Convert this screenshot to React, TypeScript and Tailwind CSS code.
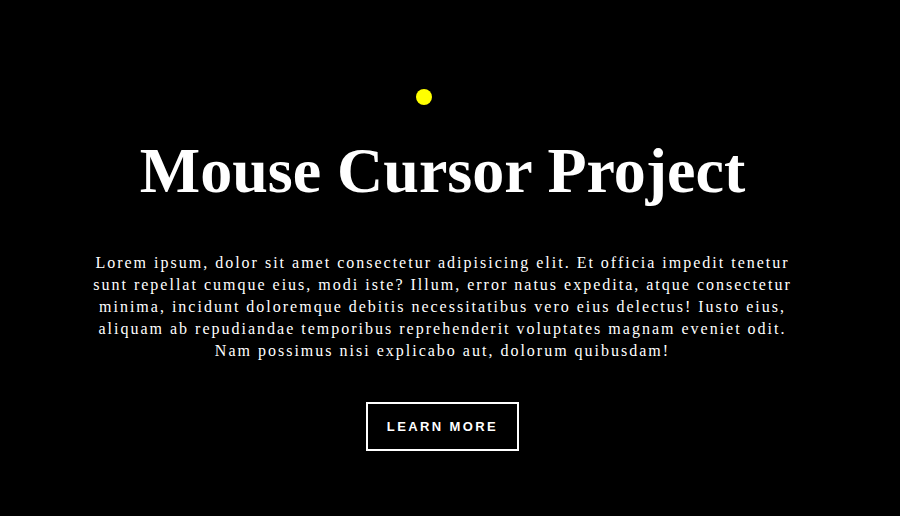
const App = () => {
  return (
    <div className="relative min-h-[516px] w-full bg-black text-white overflow-hidden">
      <div className="absolute left-[416px] top-[89px] h-4 w-4 rounded-full bg-[#ffff00]" />
      <div className="flex flex-col items-center pr-[15px] pt-[136px] font-['Liberation_Serif',serif]">
        <h1 className="text-[64px] font-bold leading-[70.8px]">Mouse Cursor Project</h1>
        <p className="mt-[45px] w-[700px] text-center text-base leading-snug tracking-[2px]">
          Lorem ipsum, dolor sit amet consectetur adipisicing elit. Et officia impedit tenetur
          sunt repellat cumque eius, modi iste? Illum, error natus expedita, atque consectetur
          minima, incidunt doloremque debitis necessitatibus vero eius delectus! Iusto eius,
          aliquam ab repudiandae temporibus reprehenderit voluptates magnam eveniet odit. Nam
          possimus nisi explicabo aut, dolorum quibusdam!
        </p>
        <button className="mt-10 border-2 border-white px-[19px] py-[15px] font-['Liberation_Sans',sans-serif] text-[13px] font-bold leading-[15px] tracking-[2.4px] text-white">
          LEARN MORE
        </button>
      </div>
    </div>
  );
};

export default App;
